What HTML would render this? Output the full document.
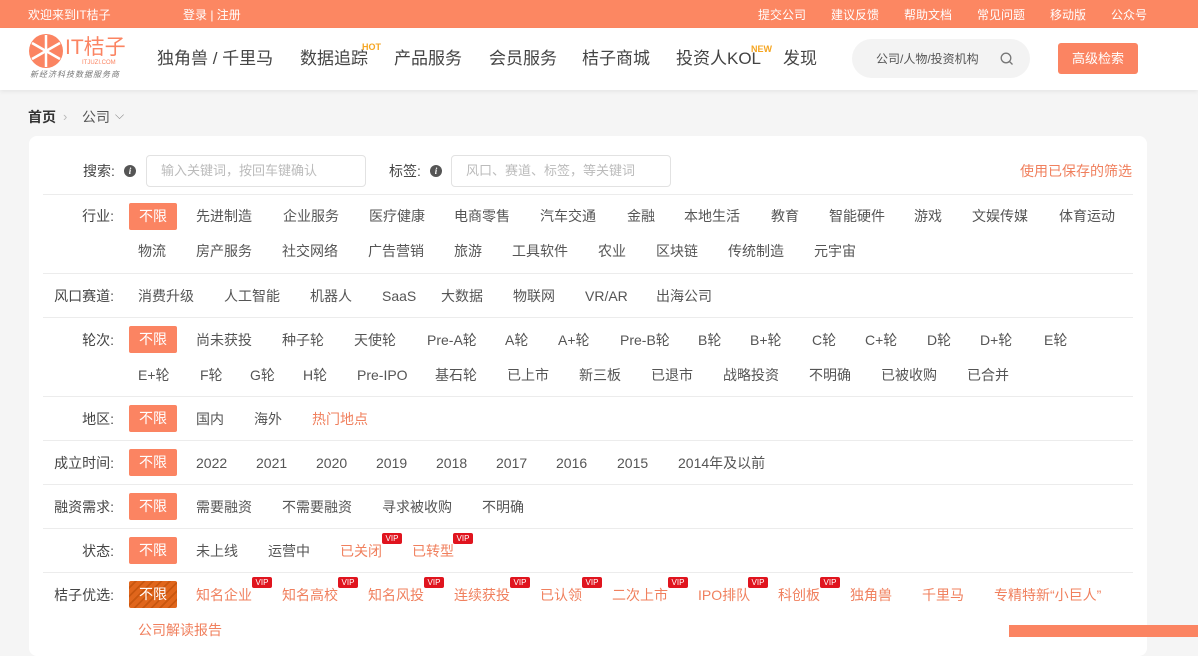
<!DOCTYPE html>
<html><head><meta charset="utf-8"><style>
*{margin:0;padding:0;box-sizing:border-box}
body{width:1198px;height:637px;overflow:hidden;background:#f5f5f5;font-family:"Liberation Sans","Noto Sans CJK SC",sans-serif;position:relative;color:#555}
.a{position:absolute;white-space:nowrap;line-height:18px}
.top{position:absolute;left:0;top:0;width:1198px;height:28px;background:#fc8762}
.top .a{color:#fff;font-size:12px;top:6px}
.hdr{position:absolute;left:0;top:28px;width:1198px;height:62px;background:#fff;box-shadow:0 2px 4px rgba(0,0,0,.06)}
.nav{font-size:17px;color:#444;top:21px;line-height:20px}
.card{position:absolute;left:29px;top:136px;width:1118px;height:520px;background:#fff;border-radius:8px}
.f{font-size:14px;color:#555}
.o{color:#f0805e}
.lb{font-size:14px;color:#444;text-align:right;width:80px;left:34px}
.ln{position:absolute;left:43px;width:1090px;height:1px;background:#ececec}
.bx{position:absolute;left:129px;width:48px;height:27px;background:#fb8462;color:#fff;font-size:14px;line-height:27px;text-align:center;border-radius:2px}
.vip{position:absolute;width:20px;height:11px;background:#e0141e;color:#fff;font-size:8px;line-height:11px;text-align:center;border-radius:2px}
.inp{position:absolute;height:32px;border:1px solid #e2e2e2;border-radius:4px;background:#fff;color:#bbb;font-size:13px;line-height:30px;padding-left:14px}
.i{position:absolute;width:12px;height:12px;border-radius:50%;background:#555;color:#fff;font-size:9px;line-height:12px;text-align:center;font-style:italic;font-weight:bold;font-family:"Liberation Serif",serif}
</style></head><body>
<div class="top">
<span class="a" style="left:28px">欢迎来到IT桔子</span>
<span class="a" style="left:183px">登录 | 注册</span>
<span class="a" style="left:758px">提交公司</span>
<span class="a" style="left:831px">建议反馈</span>
<span class="a" style="left:904px">帮助文档</span>
<span class="a" style="left:977px">常见问题</span>
<span class="a" style="left:1050px">移动版</span>
<span class="a" style="left:1111px">公众号</span>
</div>
<div class="hdr">
<svg style="position:absolute;left:28px;top:5px" width="36" height="36" viewBox="0 0 36 36"><circle cx="18" cy="18" r="17" fill="#fb8462"/><g stroke="#fff" stroke-width="2.5"><line x1="18" y1="2" x2="18" y2="34"/><line x1="4" y1="10" x2="32" y2="26"/><line x1="4" y1="26" x2="32" y2="10"/></g></svg>
<span class="a" style="left:65px;top:8px;font-size:21px;color:#fb8462;line-height:24px">IT桔子</span>
<span class="a" style="left:82px;top:31px;font-size:6px;color:#fb8462;line-height:8px">ITJUZI.COM</span>
<span class="a" style="left:30px;top:42px;font-size:8px;color:#777;line-height:10px;letter-spacing:1px;font-style:italic">新经济科技数据服务商</span>
<span class="a nav" style="left:157px">独角兽 / 千里马</span>
<span class="a nav" style="left:300px">数据追踪</span>
<span class="a" style="left:362px;top:14px;font-size:9px;color:#f5a623;font-weight:bold;line-height:10px">HOT</span>
<span class="a nav" style="left:394px">产品服务</span>
<span class="a nav" style="left:489px">会员服务</span>
<span class="a nav" style="left:582px">桔子商城</span>
<span class="a nav" style="left:676px">投资人KOL</span>
<span class="a" style="left:751px;top:16px;font-size:9px;color:#f5a623;font-weight:bold;line-height:10px">NEW</span>
<span class="a nav" style="left:783px">发现</span>
<div style="position:absolute;left:852px;top:11px;width:178px;height:39px;border-radius:20px;background:#f3f3f3"></div>
<span class="a" style="left:876px;top:22px;font-size:12px;color:#555">公司/人物/投资机构</span>
<svg style="position:absolute;left:1000px;top:24px" width="14" height="14" viewBox="0 0 14 14"><circle cx="6" cy="6" r="4.8" fill="none" stroke="#777" stroke-width="1.3"/><line x1="9.5" y1="9.5" x2="12.5" y2="12.5" stroke="#777" stroke-width="1.3"/></svg>
<div style="position:absolute;left:1058px;top:15px;width:80px;height:31px;background:#fb8462;border-radius:3px;color:#fff;font-size:13px;line-height:31px;text-align:center">高级检索</div>
</div>
<span class="a" style="left:28px;top:108px;font-size:14px;color:#333;font-weight:bold">首页</span>
<span class="a" style="left:63px;top:108px;font-size:13px;color:#bbb">›</span>
<span class="a" style="left:82px;top:108px;font-size:14px;color:#555">公司</span>
<span class="a" style="left:115px;top:106px;font-size:12px;color:#888">⌵</span>
<div class="card"></div>
<span class="a f" style="left:83px;top:162px;color:#444">搜索:</span>
<div class="i" style="left:124px;top:165px">i</div>
<div class="inp" style="left:146px;top:155px;width:220px">输入关键词，按回车键确认</div>
<span class="a f" style="left:389px;top:162px;color:#444">标签:</span>
<div class="i" style="left:430px;top:165px">i</div>
<div class="inp" style="left:451px;top:155px;width:220px">风口、赛道、标签，等关键词</div>
<span class="a f o" style="left:1020px;top:162px">使用已保存的筛选</span>
<div class="ln" style="top:194px"></div>
<div class="ln" style="top:273px"></div>
<div class="ln" style="top:317px"></div>
<div class="ln" style="top:396px"></div>
<div class="ln" style="top:440px"></div>
<div class="ln" style="top:484px"></div>
<div class="ln" style="top:528px"></div>
<div class="ln" style="top:572px"></div>

<span class="a lb" style="top:207px">行业:</span>
<div class="bx" style="top:203px">不限</div>
<div class="f">
<span class="a" style="left:196px;top:207px">先进制造</span><span class="a" style="left:283px;top:207px">企业服务</span><span class="a" style="left:369px;top:207px">医疗健康</span><span class="a" style="left:454px;top:207px">电商零售</span><span class="a" style="left:540px;top:207px">汽车交通</span><span class="a" style="left:627px;top:207px">金融</span><span class="a" style="left:684px;top:207px">本地生活</span><span class="a" style="left:771px;top:207px">教育</span><span class="a" style="left:829px;top:207px">智能硬件</span><span class="a" style="left:914px;top:207px">游戏</span><span class="a" style="left:972px;top:207px">文娱传媒</span><span class="a" style="left:1059px;top:207px">体育运动</span>
<span class="a" style="left:138px;top:242px">物流</span><span class="a" style="left:196px;top:242px">房产服务</span><span class="a" style="left:282px;top:242px">社交网络</span><span class="a" style="left:368px;top:242px">广告营销</span><span class="a" style="left:454px;top:242px">旅游</span><span class="a" style="left:512px;top:242px">工具软件</span><span class="a" style="left:598px;top:242px">农业</span><span class="a" style="left:656px;top:242px">区块链</span><span class="a" style="left:728px;top:242px">传统制造</span><span class="a" style="left:814px;top:242px">元宇宙</span>

<span class="a lb" style="top:287px">风口赛道:</span>
<span class="a" style="left:138px;top:287px">消费升级</span><span class="a" style="left:224px;top:287px">人工智能</span><span class="a" style="left:310px;top:287px">机器人</span><span class="a" style="left:382px;top:287px">SaaS</span><span class="a" style="left:441px;top:287px">大数据</span><span class="a" style="left:513px;top:287px">物联网</span><span class="a" style="left:585px;top:287px">VR/AR</span><span class="a" style="left:656px;top:287px">出海公司</span>

<span class="a lb" style="top:331px">轮次:</span>
<span class="a" style="left:196px;top:331px">尚未获投</span><span class="a" style="left:282px;top:331px">种子轮</span><span class="a" style="left:354px;top:331px">天使轮</span><span class="a" style="left:427px;top:331px">Pre-A轮</span><span class="a" style="left:505px;top:331px">A轮</span><span class="a" style="left:558px;top:331px">A+轮</span><span class="a" style="left:620px;top:331px">Pre-B轮</span><span class="a" style="left:698px;top:331px">B轮</span><span class="a" style="left:750px;top:331px">B+轮</span><span class="a" style="left:812px;top:331px">C轮</span><span class="a" style="left:865px;top:331px">C+轮</span><span class="a" style="left:927px;top:331px">D轮</span><span class="a" style="left:980px;top:331px">D+轮</span><span class="a" style="left:1044px;top:331px">E轮</span>
<span class="a" style="left:138px;top:366px">E+轮</span><span class="a" style="left:200px;top:366px">F轮</span><span class="a" style="left:250px;top:366px">G轮</span><span class="a" style="left:303px;top:366px">H轮</span><span class="a" style="left:357px;top:366px">Pre-IPO</span><span class="a" style="left:435px;top:366px">基石轮</span><span class="a" style="left:507px;top:366px">已上市</span><span class="a" style="left:579px;top:366px">新三板</span><span class="a" style="left:651px;top:366px">已退市</span><span class="a" style="left:723px;top:366px">战略投资</span><span class="a" style="left:809px;top:366px">不明确</span><span class="a" style="left:881px;top:366px">已被收购</span><span class="a" style="left:967px;top:366px">已合并</span>

<span class="a lb" style="top:410px">地区:</span>
<span class="a" style="left:196px;top:410px">国内</span><span class="a" style="left:254px;top:410px">海外</span><span class="a o" style="left:312px;top:410px">热门地点</span>

<span class="a lb" style="top:454px">成立时间:</span>
<span class="a" style="left:196px;top:454px">2022</span><span class="a" style="left:256px;top:454px">2021</span><span class="a" style="left:316px;top:454px">2020</span><span class="a" style="left:376px;top:454px">2019</span><span class="a" style="left:436px;top:454px">2018</span><span class="a" style="left:496px;top:454px">2017</span><span class="a" style="left:556px;top:454px">2016</span><span class="a" style="left:617px;top:454px">2015</span><span class="a" style="left:678px;top:454px">2014年及以前</span>

<span class="a lb" style="top:498px">融资需求:</span>
<span class="a" style="left:196px;top:498px">需要融资</span><span class="a" style="left:282px;top:498px">不需要融资</span><span class="a" style="left:382px;top:498px">寻求被收购</span><span class="a" style="left:482px;top:498px">不明确</span>

<span class="a lb" style="top:542px">状态:</span>
<span class="a" style="left:196px;top:542px">未上线</span><span class="a" style="left:268px;top:542px">运营中</span><span class="a o" style="left:340px;top:542px">已关闭</span><span class="a o" style="left:412px;top:542px">已转型</span>

<span class="a lb" style="top:586px">桔子优选:</span>
<span class="a o" style="left:196px;top:586px">知名企业</span><span class="a o" style="left:282px;top:586px">知名高校</span><span class="a o" style="left:368px;top:586px">知名风投</span><span class="a o" style="left:454px;top:586px">连续获投</span><span class="a o" style="left:540px;top:586px">已认领</span><span class="a o" style="left:612px;top:586px">二次上市</span><span class="a o" style="left:698px;top:586px">IPO排队</span><span class="a o" style="left:778px;top:586px">科创板</span><span class="a o" style="left:850px;top:586px">独角兽</span><span class="a o" style="left:922px;top:586px">千里马</span><span class="a o" style="left:994px;top:586px">专精特新“小巨人”</span>
<span class="a o" style="left:138px;top:621px">公司解读报告</span>
</div>
<div class="bx" style="top:247px;display:none"></div>
<div class="bx" style="top:326px">不限</div>
<div class="bx" style="top:405px">不限</div>
<div class="bx" style="top:449px">不限</div>
<div class="bx" style="top:493px">不限</div>
<div class="bx" style="top:537px">不限</div>
<div class="bx" style="top:581px;background:repeating-linear-gradient(135deg,#e0661c 0 4px,#c8560f 4px 6px)">不限</div>
<div class="vip" style="left:382px;top:533px">VIP</div>
<div class="vip" style="left:453px;top:533px">VIP</div>
<div class="vip" style="left:252px;top:577px">VIP</div>
<div class="vip" style="left:338px;top:577px">VIP</div>
<div class="vip" style="left:424px;top:577px">VIP</div>
<div class="vip" style="left:510px;top:577px">VIP</div>
<div class="vip" style="left:582px;top:577px">VIP</div>
<div class="vip" style="left:668px;top:577px">VIP</div>
<div class="vip" style="left:748px;top:577px">VIP</div>
<div class="vip" style="left:820px;top:577px">VIP</div>
<div style="position:absolute;left:1009px;top:625px;width:189px;height:12px;background:#fb8462"></div>
</body></html>
